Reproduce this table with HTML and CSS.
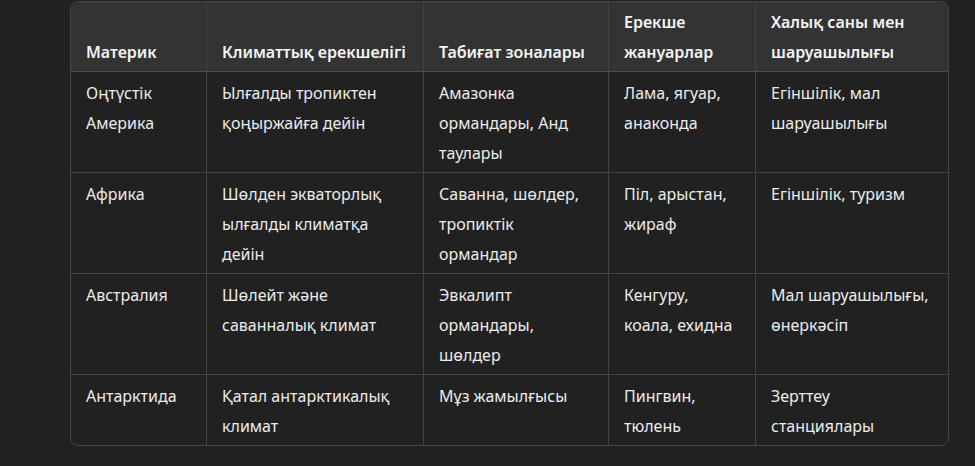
FILE: index.html
```html
<!DOCTYPE html>
<html lang="kk">
<head>
<meta charset="utf-8">
<link rel="stylesheet" href="styles.css">
</head>
<body>
<div class="page">
  <div class="table-wrap">
    <table class="data">
      <thead>
        <tr>
          <th class="c1">Материк</th>
          <th class="c2">Климаттық ерекшелігі</th>
          <th class="c3">Табиғат зоналары</th>
          <th class="c4">Ерекше жануарлар</th>
          <th class="c5">Халық саны мен шаруашылығы</th>
        </tr>
      </thead>
      <tbody>
        <tr>
          <td>Оңтүстік Америка</td>
          <td>Ылғалды тропиктен қоңыржайға дейін</td>
          <td>Амазонка ормандары, Анд таулары</td>
          <td>Лама, ягуар, анаконда</td>
          <td>Егіншілік, мал шаруашылығы</td>
        </tr>
        <tr>
          <td>Африка</td>
          <td>Шөлден экваторлық ылғалды климатқа дейін</td>
          <td>Саванна, шөлдер, тропиктік ормандар</td>
          <td>Піл, арыстан, жираф</td>
          <td>Егіншілік, туризм</td>
        </tr>
        <tr>
          <td>Австралия</td>
          <td>Шөлейт және саванналық климат</td>
          <td>Эвкалипт ормандары, шөлдер</td>
          <td>Кенгуру, коала, ехидна</td>
          <td>Мал шаруашылығы, өнеркәсіп</td>
        </tr>
        <tr>
          <td>Антарктида</td>
          <td>Қатал антарктикалық климат</td>
          <td>Мұз жамылғысы</td>
          <td>Пингвин, тюлень</td>
          <td>Зерттеу станциялары</td>
        </tr>
      </tbody>
    </table>
  </div>
</div>
</body>
</html>
```

FILE: styles.css
```css
html, body {
  margin: 0;
  padding: 0;
  background: #212121;
}

body {
  font-family: "Noto Sans", "Open Sans", sans-serif;
  font-size: 16px;
  color: #ececec;
}

.page {
  padding: 1px 0 0 70px;
}

.table-wrap {
  width: 877px;
  border: 1px solid #444;
  border-radius: 8px;
  overflow: hidden;
}

.data {
  width: 877px;
  border-collapse: separate;
  border-spacing: 0;
  table-layout: fixed;
}

.data th,
.data td {
  box-sizing: border-box;
  padding: 6px 16px 4px 15px;
  line-height: 30px;
  text-align: left;
  border-right: 1px solid #444;
  border-bottom: 1px solid #444;
}

.data th:last-child,
.data td:last-child {
  border-right: none;
}

.data tbody tr:last-child td {
  border-bottom: none;
}

.data th {
  background: #333333;
  color: #f4f4f4;
  font-weight: 600;
  vertical-align: bottom;
  padding-top: 5px;
  padding-bottom: 4px;
  border-bottom-color: #4c4c4c;
}

.data td {
  vertical-align: top;
}

.c1 { width: 136px; }
.c2 { width: 217px; }
.c3 { width: 185px; }
.c4 { width: 147px; }
.c5 { width: 192px; }
```
